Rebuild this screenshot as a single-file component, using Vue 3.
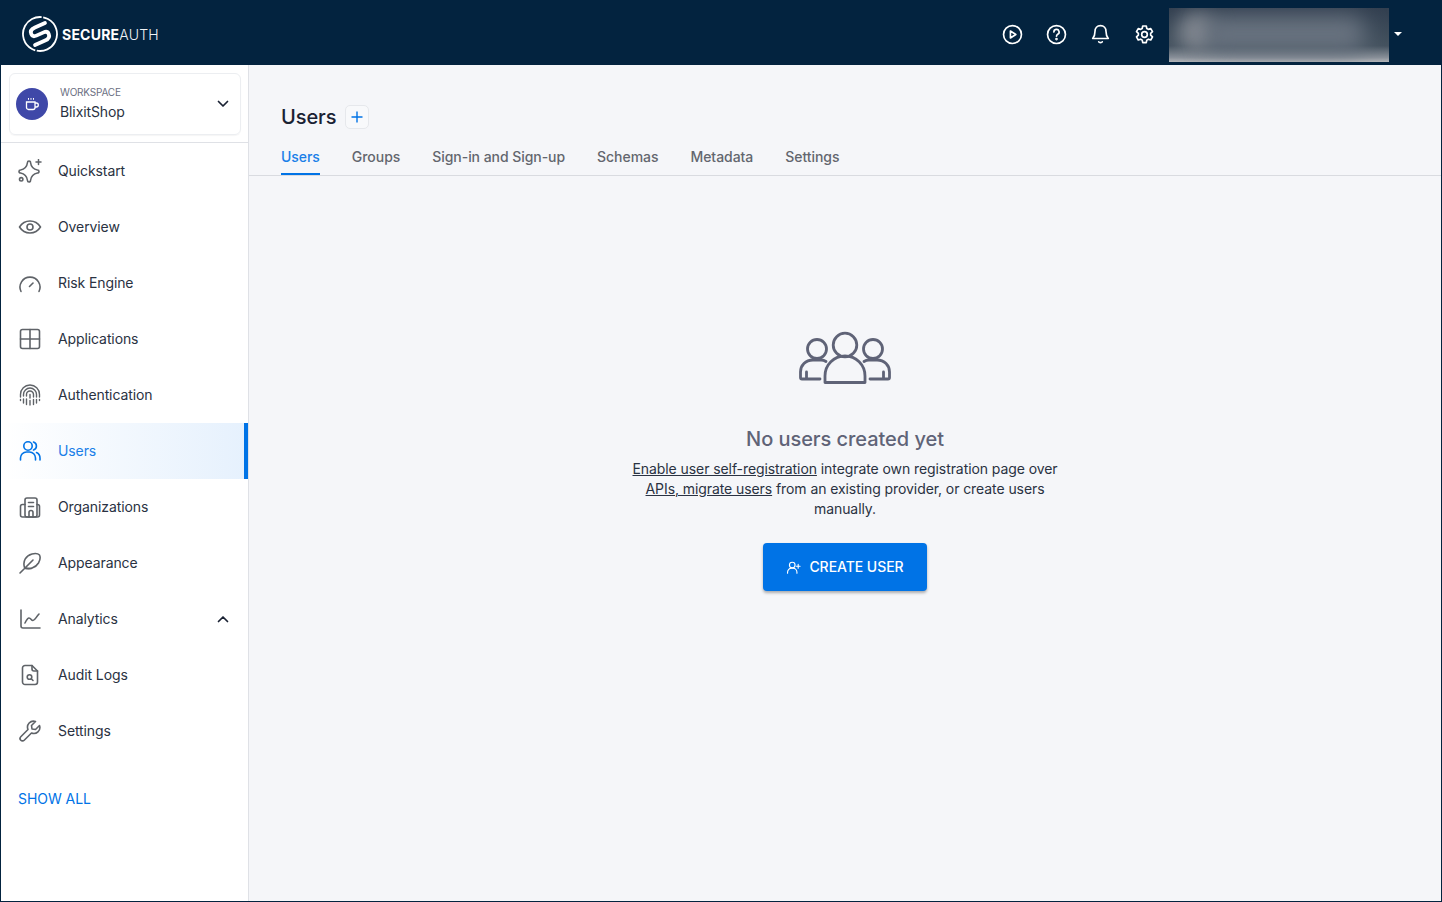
<script setup>
const navItems = [
  { label: 'Quickstart', icon: 'quickstart' },
  { label: 'Overview', icon: 'overview' },
  { label: 'Risk Engine', icon: 'risk' },
  { label: 'Applications', icon: 'apps' },
  { label: 'Authentication', icon: 'auth' },
  { label: 'Users', icon: 'users', active: true },
  { label: 'Organizations', icon: 'orgs' },
  { label: 'Appearance', icon: 'appearance' },
  { label: 'Analytics', icon: 'analytics', expand: true },
  { label: 'Audit Logs', icon: 'audit' },
  { label: 'Settings', icon: 'settings' },
]
const tabs = ['Users', 'Groups', 'Sign-in and Sign-up', 'Schemas', 'Metadata', 'Settings']
</script>

<template>
  <div class="page">
    <header class="topbar">
      <div class="logo">
        <svg width="36" height="36" viewBox="0 0 36 36" fill="none" stroke="#fff">
          <circle cx="18" cy="18" r="17" stroke-width="1.800" stroke-dasharray="48 1.500 50 1.500" transform="rotate(-62 18 18)"/>
          <path d="M27 10 16 10Q10 10 10 14.500 10 18 14 18L22 18Q26 18 26 21.500 26 26 20 26L9 26" stroke-width="3.800" stroke-linecap="round" transform="rotate(-24 18 18)"/>
        </svg>
        <span class="logo-text"><b>SECURE</b>AUTH</span>
      </div>
      <div class="top-actions">
        <svg class="top-icon" viewBox="0 0 24 24" fill="none" stroke="#fff" stroke-width="1.600">
          <circle cx="12" cy="12" r="8.600"/><path d="M10 8.700v6.600l5.200-3.300z" stroke-linejoin="round"/>
        </svg>
        <svg class="top-icon" viewBox="0 0 24 24" fill="none" stroke="#fff" stroke-width="1.600">
          <circle cx="12" cy="12" r="8.600"/><path d="M9.500 9.600a2.500 2.500 0 1 1 3.700 2.200c-.8.500-1.200 1-1.200 1.900" stroke-linecap="round"/><circle cx="12" cy="16.400" r=".5" fill="#fff"/>
        </svg>
        <svg class="top-icon" viewBox="0 0 24 24" fill="none" stroke="#fff" stroke-width="1.600" stroke-linejoin="round" stroke-linecap="round">
          <path d="M12 3.500c-3.300 0-5.300 2.500-5.300 5.500 0 3.500-.8 5.200-2.200 6.800h15c-1.400-1.600-2.200-3.300-2.200-6.800 0-3-2-5.500-5.300-5.500z"/><path d="M10.300 19c.4 1 3 1 3.400 0"/>
        </svg>
        <svg class="top-icon" viewBox="0 0 24 24" fill="none" stroke="#fff" stroke-width="1.600" stroke-linejoin="round">
          <path d="M10.300 3.800h3.400l.5 2.400 1.500.9 2.300-.8 1.700 3-1.800 1.600v1.800l1.800 1.600-1.700 3-2.300-.8-1.500.9-.5 2.400h-3.400l-.5-2.400-1.500-.9-2.300.8-1.700-3 1.800-1.600v-1.800L4.300 9.300l1.700-3 2.300.8 1.500-.9z"/><circle cx="12" cy="12" r="2.700"/>
        </svg>
        <div class="blur-box">
          <div class="blur-avatar"></div>
          <div class="blur-name"></div>
        </div>
        <span class="caret"></span>
      </div>
    </header>

    <div class="body">
      <aside class="sidebar">
        <div class="workspace-wrap">
          <div class="workspace">
            <span class="ws-avatar">
              <svg width="16" height="16" viewBox="0 0 16 16" fill="none" stroke="#fff" stroke-width="1.300">
                <path d="M2.500 6h8.500v5.500a2 2 0 0 1-2 2H4.500a2 2 0 0 1-2-2z"/>
                <path d="M11 7h1.300a1.600 1.600 0 0 1 0 4H11"/>
                <path d="M4.500 2v1.800M7 2v1.800M9.500 2v1.800" stroke-width="1"/>
              </svg>
            </span>
            <div class="ws-text">
              <span class="ws-label">WORKSPACE</span>
              <span class="ws-name">BlixitShop</span>
            </div>
            <svg class="chev" width="12" height="8" viewBox="0 0 12 8" fill="none" stroke="#1a2233" stroke-width="1.700" stroke-linecap="round" stroke-linejoin="round">
              <path d="M1.500 1.500 6 6l4.500-4.500"/>
            </svg>
          </div>
        </div>

        <nav class="nav">
          <a v-for="item in navItems" :key="item.label" class="nav-item" :class="{ active: item.active }">
            <svg class="nav-icon" viewBox="0 0 24 24" fill="none" stroke="currentColor" stroke-width="1.600" stroke-linecap="round" stroke-linejoin="round">
              <template v-if="item.icon === 'quickstart'">
                <path d="M9.500 3.500a1.500 1.500 0 0 1 3 0c.6 4.500 2.500 6.700 7 7.500a1.500 1.500 0 0 1 0 3c-4.500.8-6.400 3-7 7.500a1.500 1.500 0 0 1-3 0c-.6-4.500-2.500-6.700-7-7.500a1.500 1.500 0 0 1 0-3c4.500-.8 6.400-3 7-7.500z"/>
                <path d="M20.500 .5v5M18 3h5" stroke-width="1.500"/>
                <circle cx="3.200" cy="20.300" r="1.700"/>
              </template>
              <template v-else-if="item.icon === 'overview'">
                <path d="M1.500 12C4 8 7.500 6 12 6s8 2 10.500 6c-2.500 4-6 6-10.500 6s-8-2-10.500-6z"/>
                <circle cx="12" cy="12" r="3"/>
              </template>
              <template v-else-if="item.icon === 'risk'">
                <path d="M3 20.500a10 10 0 1 1 18 0"/>
                <path d="M11.500 15.500l3.500-3.500"/>
              </template>
              <template v-else-if="item.icon === 'apps'">
                <rect x="2.500" y="2.500" width="19" height="19" rx="2"/>
                <path d="M12 2.500v19M2.500 12h19"/>
              </template>
              <template v-else-if="item.icon === 'auth'">
                <path d="M2.500 14v-2.500a9.500 9.500 0 0 1 19 0V14M5.500 13v-1.500a6.500 6.500 0 0 1 13 0V14M8.500 13v-1.500a3.500 3.500 0 0 1 7 0V14M12 11.500V15" stroke-width="1.400"/>
                <path d="M2.500 16.500v1M5.500 16v4M8.500 16v5.500M12 17.500v4.500M15.500 16.500v5M18.500 16.500v3.500M21.500 16.500v1" stroke-width="1.400"/>
              </template>
              <template v-else-if="item.icon === 'users'">
                <circle cx="10" cy="7" r="4.200"/>
                <path d="M2.500 21v-2a6 6 0 0 1 6-6h3a6 6 0 0 1 6 6v2"/>
                <path d="M15.500 3a4.200 4.200 0 0 1 0 8M18.500 13.500a6 6 0 0 1 3.500 5.500v2"/>
              </template>
              <template v-else-if="item.icon === 'orgs'">
                <rect x="7" y="3" width="12" height="19" rx="2"/>
                <path d="M7 9.500H4.500a2 2 0 0 0-2 2V20a2 2 0 0 0 2 2h15a2 2 0 0 0 2-2v-8.500a2 2 0 0 0-2-2H19"/>
                <path d="M10.500 7.500h5M10.500 11.500h5M11 22v-4.500a2 2 0 0 1 4 0V22"/>
              </template>
              <template v-else-if="item.icon === 'appearance'">
                <path d="M6.500 16.500C4.500 10 8 4.500 14 3c3-.7 6-.5 7.500 1 1 2 .7 5-1 8-3 5-9.500 7-14 4.500z"/>
                <path d="M2 22 15 9M6.500 17.500h7"/>
              </template>
              <template v-else-if="item.icon === 'analytics'">
                <path d="M3 3v16a2 2 0 0 0 2 2h17"/>
                <path d="M7 16c1.500-3 2.500-5 4-5 2 0 2 2.500 4 2.500s3-3.500 6-6.500"/>
              </template>
              <template v-else-if="item.icon === 'audit'">
                <path d="M14 2.500H7A2.500 2.500 0 0 0 4.500 5v14A2.500 2.500 0 0 0 7 21.500h10a2.500 2.500 0 0 0 2.500-2.500V8z"/>
                <path d="M14 2.500V6a2 2 0 0 0 2 2h3.500"/>
                <circle cx="11.500" cy="14" r="2.300"/>
                <path d="m13.500 16 1.500 1.500"/>
              </template>
              <template v-else-if="item.icon === 'settings'">
                <path d="M21.500 6.500 17.500 10.500l-3.500-.5-.5-3.500 4-4a6 6 0 0 0-7.500 8L2.800 17.800a2.400 2.400 0 1 0 3.400 3.400L13.500 14a6 6 0 0 0 8-7.500z"/>
              </template>
            </svg>
            <span class="nav-label">{{ item.label }}</span>
            <svg v-if="item.expand" class="chev" width="12" height="8" viewBox="0 0 12 8" fill="none" stroke="#1a2233" stroke-width="1.700" stroke-linecap="round" stroke-linejoin="round">
              <path d="M1.500 6.500 6 2l4.500 4.500"/>
            </svg>
          </a>
        </nav>
        <a class="show-all">SHOW ALL</a>
      </aside>

      <main class="main">
        <div class="title-row">
          <h1 class="title">Users</h1>
          <button type="button" class="add-btn">
            <svg width="12" height="12" viewBox="0 0 12 12" stroke="#0073e6" stroke-width="1.400"><path d="M6 .5v11M.5 6h11"/></svg>
          </button>
        </div>
        <div class="tabs">
          <span v-for="(tab, i) in tabs" :key="tab" class="tab" :class="{ current: i === 0 }">{{ tab }}</span>
        </div>

        <section class="empty">
          <svg width="92" height="54" viewBox="0 0 92 54" fill="none" stroke="#5f6377" stroke-width="2.800" stroke-linecap="round" stroke-linejoin="round">
            <circle cx="46" cy="14" r="11.800"/>
            <path d="M26 51.500V45a20 20 0 0 1 40 0v6.500z"/>
            <circle cx="18" cy="18" r="9.500"/>
            <circle cx="74" cy="18" r="9.500"/>
            <path d="M27 30.500c-1.500-1-3-1.500-5-1.500h-8C6.500 29 1.500 34.500 1.500 41v5.500A1.500 1.500 0 0 0 3 48h18M7.500 41v6.500"/>
            <path d="M65 30.500c1.500-1 3-1.500 5-1.500h8c7.500 0 12.500 5.500 12.500 12v5.500A1.500 1.500 0 0 1 89 48H71M84.500 41v6.500"/>
          </svg>
          <h2 class="empty-title">No users created yet</h2>
          <p class="empty-text"><a>Enable user self-registration</a> integrate own registration page over <a>APIs, migrate users</a> from an existing provider, or create users manually.</p>
          <button type="button" class="create-btn">
            <svg width="15" height="15" viewBox="0 0 24 24" fill="none" stroke="#fff" stroke-width="1.800" stroke-linecap="round">
              <circle cx="10" cy="8" r="4.500"/>
              <path d="M2.500 21v-1.500A6.500 6.500 0 0 1 9 13h2a6.500 6.500 0 0 1 6.500 6.500V21M19.500 7v6M16.500 10h6"/>
            </svg>
            <span class="create-label">CREATE USER</span>
          </button>
        </section>
      </main>
    </div>
  </div>
</template>

<style>
html, body { margin: 0; padding: 0; }
</style>

<style scoped>
.page {
  width: 1442px;
  height: 902px;
  display: flex;
  flex-direction: column;
  overflow: hidden;
  font-family: Inter, "Noto Sans", sans-serif;
  color: #1a2233;
  box-sizing: border-box;
  border: 1px solid #03233f;
  border-top: none;
  background: #f5f6f9;
}

/* top bar */
.topbar {
  height: 65px;
  margin: 0 -1px;
  flex-shrink: 0;
  display: flex;
  align-items: center;
  justify-content: space-between;
  background: #03233f;
  color: #fff;
}
.logo {
  display: flex;
  align-items: center;
  gap: 4px;
  padding: 3px 0 0 22px;
}
.logo-text {
  font-size: 14px;
  font-weight: 300;
  letter-spacing: .22px;
  color: #f0f2f5;
}
.logo-text b { font-weight: 700; color: #fff; }
.top-actions {
  display: flex;
  align-items: center;
  height: 100%;
  padding-right: 40px;
}
.top-icon {
  width: 25px;
  height: 25px;
  margin: 3px 19px 0 0;
}
.top-icon:nth-child(4) { margin-right: 12px; }
.blur-box {
  position: relative;
  width: 220px;
  height: 54px;
  margin-top: 5px;
  overflow: hidden;
  background: linear-gradient(#323f50 0, #44525f 70%, #8a919a 92%, #b4b6ba 100%);
}
.blur-avatar {
  position: absolute;
  left: 8px;
  top: 4px;
  width: 40px;
  height: 40px;
  border-radius: 50%;
  background: #80868f;
  filter: blur(9px);
}
.blur-name {
  position: absolute;
  left: 36px;
  top: 8px;
  width: 160px;
  height: 36px;
  border-radius: 14px;
  background: #697380;
  filter: blur(11px);
}
.caret {
  width: 0;
  height: 0;
  margin: 3px 0 0 5px;
  border: 4px solid transparent;
  border-top: 4px solid #fff;
  border-bottom: none;
}

.body {
  flex: 1;
  display: flex;
  min-height: 0;
}

/* sidebar */
.sidebar {
  width: 247px;
  flex-shrink: 0;
  background: #fff;
  border-right: 1px solid #dfe1e6;
  box-sizing: content-box;
}
.workspace-wrap {
  height: 78px;
  padding: 8px 7px 0 8px;
  box-sizing: border-box;
  border-bottom: 1px solid #dfe1e6;
}
.workspace {
  height: 62px;
  box-sizing: border-box;
  display: flex;
  align-items: center;
  padding: 0 11px 0 6px;
  border: 1px solid #eceef1;
  border-radius: 6px;
  box-shadow: 0 1px 1px rgba(0, 0, 0, .04);
}
.ws-avatar {
  width: 32px;
  height: 32px;
  border-radius: 50%;
  background: #3f48a8;
  display: flex;
  align-items: center;
  justify-content: center;
  flex-shrink: 0;
}
.ws-text {
  flex: 1;
  display: flex;
  flex-direction: column;
  margin-left: 12px;
}
.ws-label {
  font-size: 10px;
  line-height: 14px;
  letter-spacing: -.2px;
  color: #6c7083;
}
.ws-name {
  font-size: 14px;
  line-height: 22px;
  margin-top: 2px;
  letter-spacing: -.1px;
  color: #2a3242;
}
.nav-item {
  height: 56px;
  display: flex;
  align-items: center;
  padding: 0 19px 0 17px;
  font-size: 14px;
  letter-spacing: -.1px;
  color: #2a3242;
  box-sizing: border-box;
}
.nav-item.active {
  color: #1a7fe8;
  background: linear-gradient(90deg, #fff 0, #e6f1fd 100%);
  border-right: 4px solid #0073e6;
}
.nav-icon {
  width: 24px;
  height: 24px;
  margin-right: 16px;
  color: #5f6368;
  flex-shrink: 0;
}
.active .nav-icon { color: #0073e6; }
.nav-label {
  flex: 1;
  padding-bottom: 2px;
}
.show-all {
  display: block;
  margin: 31px 0 0 17px;
  font-size: 14px;
  line-height: 17px;
  letter-spacing: -.05px;
  color: #0073e6;
}

/* main content */
.main {
  flex: 1;
  display: flex;
  flex-direction: column;
  min-width: 0;
}
.title-row {
  display: flex;
  align-items: center;
  gap: 9px;
  padding: 40px 32px 0;
  height: 24px;
}
.title {
  margin: 0;
  font-size: 20px;
  line-height: 24px;
  font-weight: 500;
  letter-spacing: -.1px;
}
.add-btn {
  width: 24px;
  height: 24px;
  padding: 0;
  display: flex;
  align-items: center;
  justify-content: center;
  background: #f8f9fb;
  border: 1px solid #e6e8ec;
  border-radius: 5px;
}
.tabs {
  display: flex;
  gap: 32px;
  padding: 11px 32px 0;
  height: 35px;
  box-sizing: content-box;
  border-bottom: 1px solid #d9dbe0;
}
.tab {
  font-size: 14px;
  line-height: 17px;
  padding-top: 8px;
  font-weight: 500;
  letter-spacing: -.05px;
  color: #63666e;
  height: 25px;
  box-sizing: content-box;
}
.tab.current {
  color: #1a7fe8;
  border-bottom: 2px solid #0073e6;
}

.empty {
  display: flex;
  flex-direction: column;
  align-items: center;
  padding-top: 155px;
}
.empty-title {
  margin: 40px 0 0;
  font-size: 20px;
  line-height: 28px;
  font-weight: 500;
  color: #5f6377;
  letter-spacing: -.05px;
}
.empty-text {
  width: 440px;
  margin: 6px 0 0;
  font-size: 14px;
  line-height: 20px;
  letter-spacing: -.08px;
  text-align: center;
  color: #2a3242;
}
.empty-text a { text-decoration: underline; }
.create-btn {
  width: 164px;
  height: 48px;
  margin-top: 24px;
  display: flex;
  align-items: center;
  justify-content: center;
  gap: 8px;
  background: #0073e6;
  color: #fff;
  border: none;
  border-radius: 4px;
  font-family: inherit;
  font-size: 14px;
  font-weight: 500;
  letter-spacing: -.05px;
  box-shadow: 0 2px 3px rgba(0, 0, 0, .3);
}
.create-label { padding-bottom: 2px; }
</style>
